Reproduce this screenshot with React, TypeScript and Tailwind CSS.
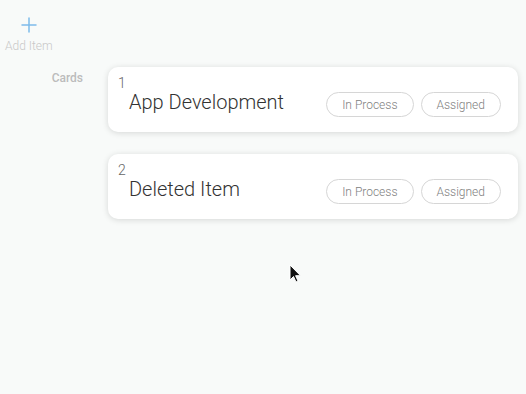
import { Plus } from "lucide-react";

interface CardItem {
  num: number;
  title: string;
  tags: string[];
}

const cards: CardItem[] = [
  { num: 1, title: "App Development", tags: ["In Process", "Assigned"] },
  { num: 2, title: "Deleted Item", tags: ["In Process", "Assigned"] },
];

function Card({ item }: { item: CardItem }) {
  return (
    <div className="relative h-[65px] rounded-[10px] bg-white shadow-[0_1px_6px_rgba(0,0,0,0.14)] flex items-center pl-[21px] pr-[17px]">
      <span className="absolute left-[10px] top-[8px] text-[14px] leading-4 text-[#666] font-light">
        {item.num}
      </span>
      <div className="flex-1 pt-[5px] text-[20px] font-light text-[#333] leading-6">
        {item.title}
      </div>
      <div className="flex gap-[7px] pt-[10px]">
        {item.tags.map((t) => (
          <span
            key={t}
            className="h-[25px] px-[15px] flex items-center rounded-full border border-[#d6d6d6] text-[12px] text-[#808080] font-light"
          >
            {t}
          </span>
        ))}
      </div>
    </div>
  );
}

function Cursor() {
  return (
    <svg
      className="absolute left-[289px] top-[264px]"
      width="13"
      height="20"
      viewBox="0 0 13 20"
    >
      <path
        d="M1 1 L1 16 L4.5 12.5 L7 18 L9 17 L6.6 11.7 L11.5 11.7 Z"
        fill="#111"
        stroke="#fff"
        strokeWidth="1"
      />
    </svg>
  );
}

export default function App() {
  return (
    <div
      className="relative w-[526px] h-[394px] bg-[#f8faf9] overflow-hidden"
      style={{ fontFamily: "Roboto, 'Liberation Sans', sans-serif" }}
    >
      <div className="pl-[5px] pt-[13px] w-fit flex flex-col items-center">
        <Plus size={24} strokeWidth={1.5} className="text-[#7dbbea]" />
        <span className="text-[12px] leading-4 text-[#c8c8c8] mt-[1px] font-light">Add Item</span>
      </div>
      <div className="flex mt-[13px]">
        <div className="w-[108px] pr-[25px] text-right text-[12px] font-medium text-[#bcbcbc] pt-[2px]">
          Cards
        </div>
        <div className="flex-1 mr-[8px] flex flex-col gap-[22px]">
          {cards.map((c) => (
            <Card key={c.num} item={c} />
          ))}
        </div>
      </div>
      <Cursor />
    </div>
  );
}
